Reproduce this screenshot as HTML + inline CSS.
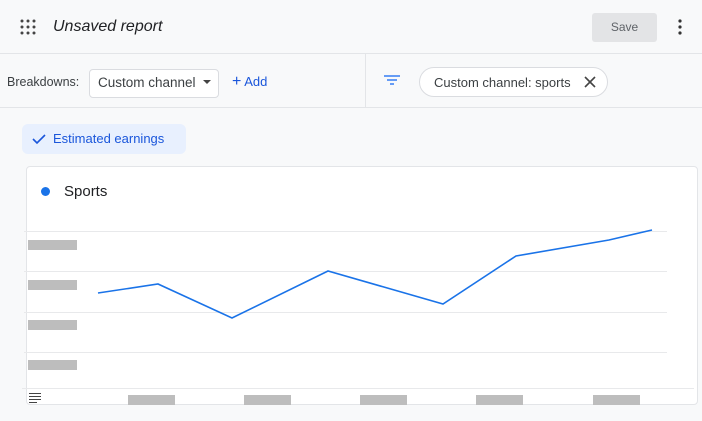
<!DOCTYPE html><html><head><style>
body{margin:0;width:702px;height:421px;background:#f8f9fa;font-family:"Liberation Sans",Arial,sans-serif;position:relative;overflow:hidden}
.a{position:absolute}
.g{background:#bdbdbd;height:10px}
</style></head><body>
<svg class="a" style="left:20px;top:19px" width="16" height="16"><g fill="#444"><circle cx="2" cy="2" r="1.5"/><circle cx="8" cy="2" r="1.5"/><circle cx="14" cy="2" r="1.5"/><circle cx="2" cy="8" r="1.5"/><circle cx="8" cy="8" r="1.5"/><circle cx="14" cy="8" r="1.5"/><circle cx="2" cy="14" r="1.5"/><circle cx="8" cy="14" r="1.5"/><circle cx="14" cy="14" r="1.5"/></g></svg>
<div class="a" style="left:53px;top:18px;font-size:16px;font-style:italic;color:#202124">Unsaved report</div>
<div class="a" style="left:592px;top:13px;width:65px;height:29px;background:#e3e4e6;border-radius:3px;color:#5f6368;font-size:12px;text-align:center;line-height:29px">Save</div>
<svg class="a" style="left:677px;top:19px" width="6" height="16"><g fill="#333"><circle cx="3" cy="2" r="1.6"/><circle cx="3" cy="8" r="1.6"/><circle cx="3" cy="14" r="1.6"/></g></svg>
<div class="a" style="left:0;top:53px;width:702px;height:1px;background:#e3e5e8"></div>
<div class="a" style="left:0;top:107px;width:702px;height:1px;background:#e3e5e8"></div>
<div class="a" style="left:365px;top:54px;width:1px;height:53px;background:#e3e5e8"></div>
<div class="a" style="left:7px;top:75px;font-size:12.5px;color:#3c4043">Breakdowns:</div>
<div class="a" style="left:89px;top:69px;width:128px;height:27px;border:1px solid #dadce0;border-radius:4px;background:#fff"></div>
<div class="a" style="left:98px;top:75px;font-size:13.5px;color:#3c4043">Custom channel</div>
<div class="a" style="left:203px;top:80px;border-left:4px solid transparent;border-right:4px solid transparent;border-top:4px solid #444"></div>
<div class="a" style="left:232px;top:73px;font-size:13px;color:#1a56db"><span style="font-size:16px">+</span> Add</div>
<svg class="a" style="left:384px;top:74px" width="16" height="12"><g stroke="#4285f4" stroke-width="1.6"><line x1="0" y1="2" x2="16" y2="2"/><line x1="3" y1="6" x2="13" y2="6"/><line x1="6" y1="10" x2="10" y2="10"/></g></svg>
<div class="a" style="left:419px;top:67px;width:187px;height:28px;border:1px solid #dadce0;border-radius:15px;background:#fff"></div>
<div class="a" style="left:434px;top:75px;font-size:13px;color:#3c4043">Custom channel: sports</div>
<svg class="a" style="left:584px;top:76px" width="12" height="12"><g stroke="#444" stroke-width="1.6"><line x1="1" y1="1" x2="11" y2="11"/><line x1="11" y1="1" x2="1" y2="11"/></g></svg>
<div class="a" style="left:22px;top:124px;width:164px;height:30px;background:#e8f0fe;border-radius:6px"></div>
<svg class="a" style="left:32px;top:133px" width="14" height="12"><path d="M1 6 L5 10 L13 2" stroke="#1a56db" stroke-width="1.6" fill="none"/></svg>
<div class="a" style="left:53px;top:131px;font-size:13px;color:#1a56db">Estimated earnings</div>
<div class="a" style="left:26px;top:166px;width:670px;height:237px;background:#fff;border:1px solid #e3e5e8;border-radius:4px"></div>
<div class="a" style="left:41px;top:187px;width:9px;height:9px;border-radius:50%;background:#1a73e8"></div>
<div class="a" style="left:64px;top:183px;font-size:15px;color:#202124">Sports</div>
<svg class="a" style="left:0;top:0" width="702" height="421">
<g stroke="#e8e9eb" stroke-width="1"><line x1="24" y1="231.5" x2="667" y2="231.5"/><line x1="24" y1="271.5" x2="667" y2="271.5"/><line x1="24" y1="312.5" x2="667" y2="312.5"/><line x1="24" y1="352.5" x2="667" y2="352.5"/><line x1="22" y1="388.5" x2="694" y2="388.5"/></g>
<polyline points="98,293 158,284 232,318 328,271 443,304 516,256 609,240 652,230" fill="none" stroke="#1a73e8" stroke-width="1.6"/>
<g stroke="#444" stroke-width="1"><line x1="29" y1="393.5" x2="41" y2="393.5"/><line x1="29" y1="396.5" x2="41" y2="396.5"/><line x1="29" y1="399.5" x2="41" y2="399.5"/><line x1="29" y1="402.5" x2="37" y2="402.5"/></g>
</svg>
<div class="a g" style="left:28px;top:240px;width:49px"></div>
<div class="a g" style="left:28px;top:280px;width:49px"></div>
<div class="a g" style="left:28px;top:320px;width:49px"></div>
<div class="a g" style="left:28px;top:360px;width:49px"></div>
<div class="a g" style="left:128px;top:395px;width:47px"></div>
<div class="a g" style="left:244px;top:395px;width:47px"></div>
<div class="a g" style="left:360px;top:395px;width:47px"></div>
<div class="a g" style="left:476px;top:395px;width:47px"></div>
<div class="a g" style="left:593px;top:395px;width:47px"></div>
</body></html>
